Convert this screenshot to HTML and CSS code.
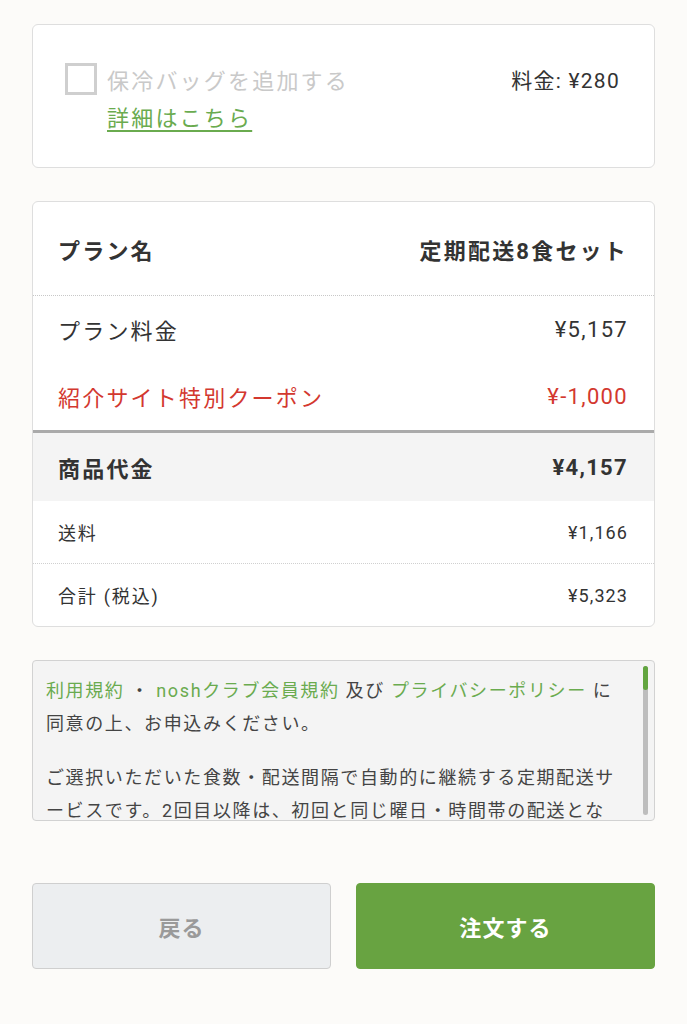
FILE: index.html
```html
<!DOCTYPE html>
<html lang="ja">
<head>
<meta charset="utf-8">
<title>注文確認</title>
<link rel="stylesheet" href="styles.css">
</head>
<body>
<main class="page">
  <section class="card option">
    <div class="option-row">
      <div class="option-left">
        <label class="check-line">
          <span class="checkbox"></span>
          <span class="check-label">保冷バッグを追加する</span>
        </label>
        <a class="detail-link" href="#">詳細はこちら</a>
      </div>
      <div class="option-price">料金: ¥280</div>
    </div>
  </section>

  <section class="card summary">
    <div class="row row-head">
      <span>プラン名</span>
      <span>定期配送8食セット</span>
    </div>
    <div class="row row-plan">
      <span>プラン料金</span>
      <span class="num">¥5,157</span>
    </div>
    <div class="row row-coupon">
      <span>紹介サイト特別クーポン</span>
      <span class="num">¥-1,000</span>
    </div>
    <div class="row row-subtotal">
      <span>商品代金</span>
      <span class="num">¥4,157</span>
    </div>
    <div class="row row-small row-ship">
      <span>送料</span>
      <span class="num">¥1,166</span>
    </div>
    <div class="row row-small">
      <span>合計 (税込)</span>
      <span class="num">¥5,323</span>
    </div>
  </section>

  <section class="terms">
    <div class="terms-text">
      <p><a href="#">利用規約</a> ・ <a href="#">noshクラブ会員規約</a> 及び <a href="#">プライバシーポリシー</a> に同意の上、お申込みください。</p>
      <p>ご選択いただいた食数・配送間隔で自動的に継続する定期配送サービスです。2回目以降は、初回と同じ曜日・時間帯の配送となります。</p>
    </div>
    <div class="scrollbar"><div class="thumb"></div></div>
  </section>

  <div class="actions">
    <button class="btn btn-back" type="button">戻る</button>
    <button class="btn btn-order" type="button">注文する</button>
  </div>
</main>
</body>
</html>
```

FILE: styles.css
```css
html, body {
  margin: 0;
  padding: 0;
}
body {
  background: #fcfbf9;
  font-family: Roboto, "Noto Sans CJK JP", sans-serif;
  color: #333;
}
.page {
  padding: 24px 32px 40px;
  display: flex;
  flex-direction: column;
}
.card {
  background: #fff;
  border: 1px solid #dedede;
  border-radius: 6px;
}
.option {
  padding: 38px 34px 33px 32px;
}
.option-row {
  display: flex;
  justify-content: space-between;
  align-items: flex-start;
}
.option-left {
  display: flex;
  flex-direction: column;
}
.check-line {
  display: flex;
  align-items: center;
  height: 32px;
}
.checkbox {
  width: 26px;
  height: 26px;
  border: 3px solid #cfcfcf;
  background: #fff;
  margin-right: 10px;
  flex: none;
}
.check-label {
  font-size: 22px;
  letter-spacing: 0.1em;
  color: #c9c9c9;
}
.detail-link {
  margin-top: 9px;
  margin-left: 42px;
  font-size: 22px;
  font-weight: 400;
  line-height: 30px;
  letter-spacing: 0.1em;
  color: #6aab4f;
  text-decoration: underline;
  text-underline-offset: 4px;
}
.option-price {
  height: 32px;
  display: flex;
  align-items: center;
  font-size: 21px;
  letter-spacing: 0.06em;
  color: #333;
}
.summary {
  margin-top: 33px;
  overflow: hidden;
}
.row {
  display: flex;
  justify-content: space-between;
  align-items: center;
  padding: 0 26px 0 25px;
  font-size: 22px;
  letter-spacing: 0.1em;
  color: #333;
}
.num {
  letter-spacing: 0.06em;
}
.row-head {
  height: 93px;
  font-weight: 700;
  border-bottom: 1px dotted #c8c8c8;
}
.row-plan {
  height: 66px;
}
.row-coupon {
  height: 68px;
  color: #d3382f;
  border-bottom: 3px solid #aaa;
}
.row-subtotal {
  height: 68px;
  background: #f4f4f4;
  font-weight: 700;
}
.row-small {
  height: 62px;
  font-size: 18px;
}
.row-ship {
  border-bottom: 1px dotted #d0d0d0;
}
.terms {
  margin-top: 33px;
  position: relative;
  height: 159px;
  background: #f4f4f4;
  border: 1px solid #d2d2d2;
  border-radius: 4px;
  overflow: hidden;
}
.terms-text {
  padding: 13px 30px 0 13px;
  font-size: 18px;
  line-height: 33px;
  letter-spacing: 0.09em;
  color: #444;
}
.terms-text p {
  margin: 0 0 21px;
}
.terms-text a {
  color: #6aab4f;
  text-decoration: none;
}
.scrollbar {
  position: absolute;
  top: 5px;
  right: 6px;
  width: 5px;
  height: 149px;
  background: #bdbdbd;
  border-radius: 3px;
}
.thumb {
  height: 24px;
  background: #62a53f;
  border-radius: 3px;
}
.actions {
  margin-top: 62px;
  display: flex;
  gap: 25px;
}
.btn {
  flex: 1;
  height: 86px;
  border-radius: 4px;
  font-family: Roboto, "Noto Sans CJK JP", sans-serif;
  font-size: 22px;
  font-weight: 700;
  letter-spacing: 0.05em;
}
.btn-back {
  background: #eceef0;
  border: 1px solid #cfcfcf;
  color: #9a9a9a;
}
.btn-order {
  background: #68a341;
  border: 1px solid #68a341;
  color: #fff;
}
```
